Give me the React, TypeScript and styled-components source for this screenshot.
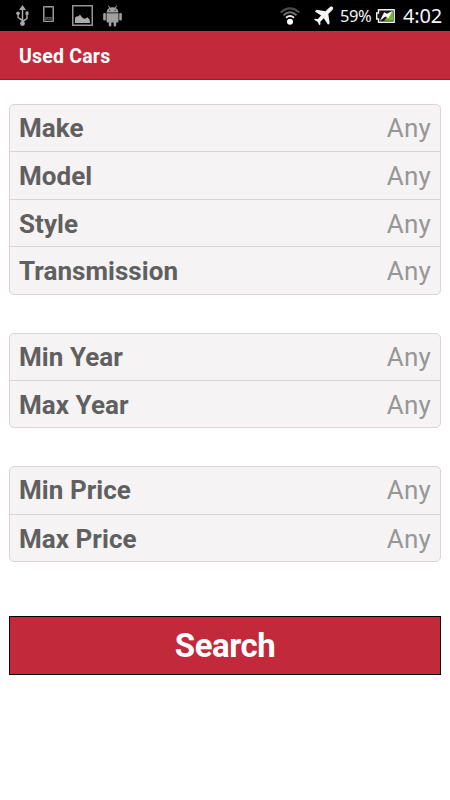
import React from 'react';
import styled, { createGlobalStyle } from 'styled-components';

const GlobalStyle = createGlobalStyle`
  * { box-sizing: border-box; }
  body { margin: 0; background: #fff; font-family: Roboto, sans-serif; }
`;

const Screen = styled.div`
  width: 450px;
  height: 800px;
  background: #fff;
  overflow: hidden;
`;

const StatusBar = styled.div`
  height: 31px;
  padding: 0 7px 0 15px;
  display: flex;
  justify-content: space-between;
  background: #000;
  color: #f4f4f4;
  font-family: 'Noto Sans', sans-serif;
`;

const StatusGroup = styled.div`
  display: flex;
  align-items: center;
  svg { display: block; flex: none; }
`;

const Icon = styled.svg<{ $gap?: number }>`
  margin-right: ${p => p.$gap ?? 0}px;
`;

const Percent = styled.span`
  width: 32px;
  margin-right: 4px;
  padding-top: 1px;
  font-size: 16.5px;
  line-height: 28px;
  letter-spacing: -0.5px;
  white-space: nowrap;
`;

const Clock = styled.span`
  width: 40px;
  padding-top: 1px;
  font-size: 20px;
  line-height: 30px;
  letter-spacing: -0.2px;
  white-space: nowrap;
`;

const TitleBar = styled.header`
  height: 49px;
  padding: 0 19px;
  border-top: 1px solid #ab3a47;
  border-bottom: 1px solid #b5101c;
  background: #c2293a;
`;

const Title = styled.h1`
  margin: 0;
  color: #fff;
  font-size: 19.5px;
  font-weight: 700;
  line-height: 49px;
  letter-spacing: 0.2px;
`;

const Form = styled.main`
  padding: 24px 9px 0;
`;

const Group = styled.section`
  margin-bottom: 37.9px;
  border: 1px solid #dbd3d5;
  border-radius: 5px;
  background: #f5f3f4;
`;

const Row = styled.div`
  height: 47.5px;
  padding: 0 9px;
  display: flex;
  justify-content: space-between;
  line-height: 48px;
  font-size: 26px;
  & + & { border-top: 1px solid #dbd3d5; }
  &:first-child { height: 46.3px; line-height: 47px; }
`;

const Label = styled.span`
  color: #606060;
  font-weight: 700;
  letter-spacing: 0.05px;
`;

const Value = styled.span`
  color: #979797;
  font-size: 26px;
  letter-spacing: 0.2px;
`;

const SearchButton = styled.button`
  display: block;
  width: 432px;
  height: 59px;
  margin-top: 54px;
  padding: 0;
  border: 1px solid #000;
  background: #c2293a;
  color: #fff;
  font: 700 33px/56px Roboto, sans-serif;
  letter-spacing: -0.5px;
`;

const UsbIcon = () => (
  <Icon $gap={13} width="15" height="22" viewBox="0 0 15 22" fill="#a9a9a9">
    <path d="M7.5 0 11 5H4z" />
    <circle cx="7.5" cy="18.5" r="2.4" />
    <circle cx="3" cy="8.3" r="1.8" />
    <path d="M10.5 6.5h3v3.3h-3z" />
    <path d="M7.5 4v14M3 8.5v3.2q0 1 1 1.5l3.5 2.3M12 9v4q0 .8-.8 1.2L7.5 16.5" fill="none" stroke="#a9a9a9" strokeWidth="1.5" />
  </Icon>
);

const PhoneIcon = () => (
  <Icon $gap={18} width="11" height="22" viewBox="0 0 11 22">
    <path d="M.5 1.5h10v15H.5z" fill="#555" stroke="#969696" />
    <path d="M2 3h7v9H2z" fill="#000" />
    <path d="M2.5 13.5h1M5 13.5h1M7.5 13.5h1M2.5 15.2h6" stroke="#161616" />
  </Icon>
);

const PictureIcon = () => (
  <Icon $gap={10} width="21" height="22" viewBox="0 0 21 22">
    <path d="M.75.75h19.5v19.5H.75z" fill="none" stroke="#959595" strokeWidth="1.5" />
    <path d="M3 18v-5l1.5-1.8 1.5.2L8 9.7l3 3.5 2 .5 2.5-1.5 2 2.2.5 3.6z" fill="#ababab" />
  </Icon>
);

const AndroidIcon = () => (
  <Icon width="19" height="22" viewBox="0 0 19 22" fill="#a0a0a0">
    <path fillRule="evenodd" d="M3.5 7.4Q3.7 4.2 6.2 2.9L5 .9l.7-.4 1.3 2.1q2.5-.7 5 0L13.3.5l.7.4-1.2 2q2.5 1.3 2.7 4.5zM6.3 4.8v1h1v-1zm5.4 0v1h1v-1z" />
    <path d="M3.5 8.2h12v8q0 1.2-1.2 1.2h-1.1v2.9q0 1.2-1.3 1.2t-1.3-1.2v-2.9H8.4v2.9q0 1.2-1.3 1.2t-1.3-1.2v-2.9H4.7q-1.2 0-1.2-1.2z" />
    <rect x=".2" y="8" width="2.6" height="7.5" rx="1.2" />
    <rect x="16.2" y="8" width="2.6" height="7.5" rx="1.2" />
  </Icon>
);

const WifiIcon = () => (
  <Icon $gap={14} width="20" height="20" viewBox="0 0 20 20" fill="none">
    <path d="M.8 6.5Q10-1.8 19.2 6.5" stroke="#4c4c4c" strokeWidth="2.3" />
    <path d="M3.5 9.2Q10 3.4 16.5 9.2" stroke="#707070" strokeWidth="2" />
    <path d="M6 11.7Q10 8.2 14 11.7" stroke="#e8e8e8" strokeWidth="1.8" />
    <circle cx="10" cy="15.8" r="3" fill="#fff" />
  </Icon>
);

const PlaneIcon = () => (
  <Icon $gap={6} width="20" height="20" viewBox="0 0 20 20" fill="#f5f5f5">
    <path d="M18.7 1.1q1.3 1.3-.8 3.4L14.3 8l1.4 9.2-1.6 1.5-4.3-6.4-3.5 3.4.2 2.6-1.1 1-1.9-3.6L0 13.8l1-1.1 2.8.2 3.3-3.4L.9 5.4l1.6-1.7 9 1.5 3.6-3.4q2.3-2 3.6-.7z" />
  </Icon>
);

const BatteryIcon = () => (
  <Icon $gap={8} width="19" height="15" viewBox="0 0 19 15">
    <path d="M2.5 1.75h15.7v12.5H2.5V11H.7V5h1.8z" fill="#161616" stroke="#eee" strokeWidth="1.4" />
    <path d="M8 12.7 17 3v9.7z" fill="#76b82a" />
    <path d="m3.8 13 4.4-8.8 2.8 1.6L16.8 2.8l-4.6 7.4-3-1.7z" fill="#fff" />
  </Icon>
);

const groups = [
  ['Make', 'Model', 'Style', 'Transmission'],
  ['Min Year', 'Max Year'],
  ['Min Price', 'Max Price'],
];

export default function App() {
  return (
    <Screen>
      <GlobalStyle />
      <StatusBar>
        <StatusGroup>
          <UsbIcon />
          <PhoneIcon />
          <PictureIcon />
          <AndroidIcon />
        </StatusGroup>
        <StatusGroup>
          <WifiIcon />
          <PlaneIcon />
          <Percent>59%</Percent>
          <BatteryIcon />
          <Clock>4:02</Clock>
        </StatusGroup>
      </StatusBar>
      <TitleBar>
        <Title>Used Cars</Title>
      </TitleBar>
      <Form>
        {groups.map(labels => (
          <Group key={labels[0]}>
            {labels.map(label => (
              <Row key={label}>
                <Label>{label}</Label>
                <Value>Any</Value>
              </Row>
            ))}
          </Group>
        ))}
        <SearchButton>Search</SearchButton>
      </Form>
    </Screen>
  );
}
